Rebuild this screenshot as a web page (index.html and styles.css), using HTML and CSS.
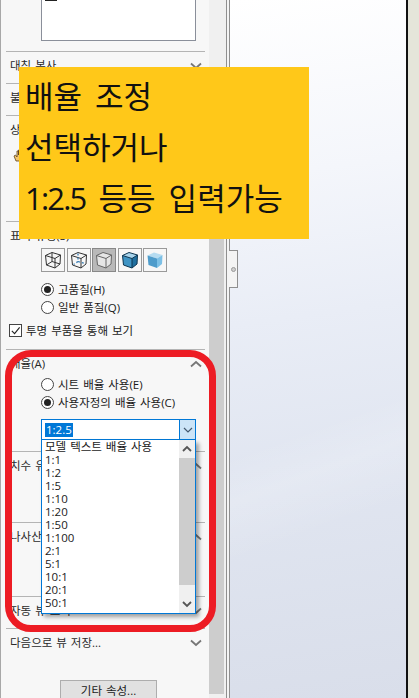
FILE: index.html
```html
<!DOCTYPE html>
<html lang="ko">
<head>
  <meta charset="UTF-8">
  <meta name="viewport" content="width=device-width, initial-scale=1.0">
  <title>배율 조정</title>
  <link rel="stylesheet" href="styles.css">
</head>
<body>
  <div class="app">
    <div class="panel">
      <div class="preview-wrap">
        <div class="preview"><span class="preview-dash"></span></div>
      </div>

      <div class="section section-short">
        <div class="section-head"><span>대칭 복사</span><svg class="chevron" viewBox="0 0 12 8"><path d="M1 1.500 6 6l5-4.500"/></svg></div>
      </div>
      <div class="section section-short">
        <div class="section-head"><span>불러올 모델</span><svg class="chevron" viewBox="0 0 12 8"><path d="M1 1.500 6 6l5-4.500"/></svg></div>
      </div>
      <div class="section section-state">
        <div class="section-head"><span>상태</span></div>
        <svg class="hand" viewBox="0 0 12 14"><path d="M3 13 1 8l1.500-1L4 9V3h1.500v4V2H7v5V3h1.500v4.500V5H10v6l-1 2z"/></svg>
      </div>
      <div class="section section-display">
        <div class="section-head"><span>표시 유형(S)</span></div>
        <div class="view-buttons">
          <button class="view-button">
            <svg viewBox="0 0 20 20"><path class="wire" d="M2.500 5.500 9 2.500 17.500 5 17 14l-5 4-8.500-3zM2.500 5.500 12 8.500 17.500 5M12 8.500V18M9 2.500v9l-5.500 3.500M9 11.500l8 2.500"/></svg>
          </button>
          <button class="view-button">
            <svg viewBox="0 0 20 20"><path class="wire" d="M2.500 5.500 9 2.500 17.500 5 17 14l-5 4-8.500-3zM2.500 5.500 12 8.500 17.500 5M12 8.500V18"/><path class="hidden-line" d="M9 3.500v8L4.500 14.500M9 11.500l7 2"/></svg>
          </button>
          <button class="view-button is-active">
            <svg viewBox="0 0 20 20"><path class="solid-grey" d="M2.500 5.500 9 2.500 17.500 5 17 14l-5 4-8.500-3z"/><path class="wire-grey" d="M2.500 5.500 12 8.500 17.500 5M12 8.500V18"/></svg>
          </button>
          <button class="view-button">
            <svg viewBox="0 0 20 20"><path class="face-top" d="M2.500 5.500 9 2.500 17.500 5 12 8.500z"/><path class="face-front" d="M2.500 5.500 12 8.500V18l-8.500-3z"/><path class="face-side" d="M12 8.500 17.500 5 17 14l-5 4z"/><path class="wire-dark" d="M2.500 5.500 9 2.500 17.500 5 17 14l-5 4-8.500-3zM2.500 5.500 12 8.500 17.500 5M12 8.500V18"/></svg>
          </button>
          <button class="view-button">
            <svg viewBox="0 0 20 20"><path class="face-top-soft" d="M2.500 5.500 9 2.500 17.500 5 12 8.500z"/><path class="face-front-soft" d="M2.500 5.500 12 8.500V18l-8.500-3z"/><path class="face-side-soft" d="M12 8.500 17.500 5 17 14l-5 4z"/></svg>
          </button>
        </div>
        <label class="radio-row"><span class="radio is-on"></span>고품질(H)</label>
        <label class="radio-row"><span class="radio"></span>일반 품질(Q)</label>
        <label class="check-row"><span class="check"><svg viewBox="0 0 12 12"><path d="M2 6.500 5 9.500 10.500 2.500"/></svg></span>투명 부품을 통해 보기</label>
      </div>
      <div class="section section-scale">
        <div class="section-head"><span>배율(A)</span><svg class="chevron" viewBox="0 0 12 8"><path d="M1 6.500 6 2l5 4.500"/></svg></div>
        <label class="radio-row radio-first"><span class="radio"></span>시트 배율 사용(E)</label>
        <label class="radio-row"><span class="radio is-on"></span>사용자정의 배율 사용(C)</label>
      </div>
      <div class="section section-dim">
        <div class="section-head"><span>치수 유형</span><svg class="chevron" viewBox="0 0 12 8"><path d="M1 6.500 6 2l5 4.500"/></svg></div>
      </div>
      <div class="section section-thread">
        <div class="section-head"><span>나사산 표시</span><svg class="chevron" viewBox="0 0 12 8"><path d="M1 6.500 6 2l5 4.500"/></svg></div>
      </div>
      <div class="section section-short">
        <div class="section-head"><span>자동 뷰 표시</span><svg class="chevron" viewBox="0 0 12 8"><path d="M1 1.500 6 6l5-4.500"/></svg></div>
      </div>
      <div class="section section-save">
        <div class="section-head"><span>다음으로 뷰 저장...</span><svg class="chevron" viewBox="0 0 12 8"><path d="M1 1.500 6 6l5-4.500"/></svg></div>
      </div>
      <div class="more-row"><button class="more-button">기타 속성...</button></div>
    </div>

    <div class="panel-scroll"><div class="panel-thumb"></div></div>

    <div class="sash"></div>
    <div class="viewport"></div>
    <div class="frame-edge"></div>
  </div>

  <div class="sash-handle"><span></span></div>

  <div class="ring"></div>

  <div class="combo">
    <div class="combo-field">
      <div class="combo-value"><span>1:2.5</span></div>
      <div class="combo-arrow"><svg class="chevron chevron-blue" viewBox="0 0 12 8"><path d="M2 2l4 4 4-4"/></svg></div>
    </div>
    <div class="combo-list">
      <ul class="combo-items">
        <li>모델 텍스트 배율 사용</li>
        <li>1:1</li>
        <li>1:2</li>
        <li>1:5</li>
        <li>1:10</li>
        <li>1:20</li>
        <li>1:50</li>
        <li>1:100</li>
        <li>2:1</li>
        <li>5:1</li>
        <li>10:1</li>
        <li>20:1</li>
        <li>50:1</li>
      </ul>
      <div class="list-scroll">
        <svg class="list-arrow" viewBox="0 0 12 8"><path d="M2 6l4-4 4 4"/></svg>
        <div class="list-thumb"></div>
        <svg class="list-arrow list-arrow-down" viewBox="0 0 12 8"><path d="M2 2l4 4 4-4"/></svg>
      </div>
    </div>
  </div>

  <div class="callout">
    <p>배율 조정</p>
    <p>선택하거나</p>
    <p><span class="callout-ratio">1:2.5</span> 등등 입력가능</p>
  </div>
</body>
</html>
```

FILE: styles.css
```css
* {
  box-sizing: border-box;
}

html,
body {
  height: 100%;
}

body {
  margin: 0;
  overflow: hidden;
  position: relative;
  font-family: "Open Sans", "Noto Sans CJK KR", sans-serif;
  font-size: 11.5px;
  word-spacing: 1px;
  color: #1a1a1a;
  background-color: #f7f7f7;
}

.app {
  display: flex;
  height: 698px;
}

.panel {
  width: 209px;
  flex: none;
  padding-left: 5px;
  padding-right: 4px;
  background-color: #f7f7f7;
  border-left: 1px solid #a8a8a8;
  overflow: hidden;
}

.preview-wrap {
  height: 51px;
  padding-left: 35px;
  padding-right: 9px;
}

.preview {
  height: 41px;
  background-color: white;
  border: 1px solid #8a8f9a;
  border-top: none;
}

.preview-dash {
  display: block;
  width: 12px;
  height: 1px;
  margin-left: 3px;
  background-color: #222;
}

.section {
  border-top: 1px solid #b4b4b4;
  padding-top: 4px;
}

.section-short {
  height: 32px;
}

.section-state {
  height: 106px;
}

.section-display {
  height: 128px;
}

.section-scale {
  height: 102px;
}

.section-dim {
  height: 71px;
}

.section-thread {
  height: 74px;
}

.section-save {
  height: 52px;
}

.section-head {
  display: flex;
  align-items: center;
  justify-content: space-between;
  height: 20px;
  padding-left: 4px;
  padding-right: 3px;
  line-height: 20px;
  color: #2a2a2a;
}

.chevron {
  width: 12px;
  height: 8px;
  flex: none;
  fill: none;
  stroke: #777;
  stroke-width: 1.8;
}

.chevron-blue {
  stroke: #44596e;
  stroke-width: 1.2;
}

.hand {
  display: block;
  width: 12px;
  height: 14px;
  margin: 8px 0 0 7px;
  fill: #f2c56b;
  stroke: #5a4020;
  stroke-width: 0.8;
}

.view-buttons {
  display: flex;
  gap: 1.5px;
  margin: 2px 0 8px 35px;
}

.view-button {
  width: 24px;
  height: 24px;
  padding: 1px;
  background-color: #f7f7f7;
  border: 1px solid #9a9a9a;
}

.view-button svg {
  display: block;
  width: 20px;
  height: 20px;
}

.view-button.is-active {
  background-color: #b9b9b9;
  border-color: #888;
}

.wire {
  fill: none;
  stroke: #333;
  stroke-width: 1;
}

.hidden-line {
  fill: none;
  stroke: #3b7fb5;
  stroke-width: 1.3;
  stroke-dasharray: 2 2;
}

.solid-grey {
  fill: #e6e6e6;
  stroke: #666;
  stroke-width: 1;
}

.wire-grey {
  fill: none;
  stroke: #666;
  stroke-width: 1;
}

.face-top {
  fill: #a8d4ec;
}

.face-front {
  fill: #3f94c4;
}

.face-side {
  fill: #1f6f9f;
}

.wire-dark {
  fill: none;
  stroke: #0d3550;
  stroke-width: 1;
}

.face-top-soft {
  fill: #b6dcf1;
}

.face-front-soft {
  fill: #4e9ccb;
}

.face-side-soft {
  fill: #7cc0e6;
}

.radio-row {
  display: flex;
  align-items: center;
  gap: 4px;
  height: 18px;
  padding-left: 35px;
}

.radio-first {
  margin-top: 1px;
}

.radio {
  width: 13px;
  height: 13px;
  flex: none;
  position: relative;
  background-color: white;
  border: 1px solid #444;
  border-radius: 50%;
}

.radio.is-on::after {
  content: "";
  position: absolute;
  left: 2px;
  top: 2px;
  width: 7px;
  height: 7px;
  border-radius: 50%;
  background-color: #222;
}

.check-row {
  display: flex;
  align-items: center;
  gap: 4px;
  height: 18px;
  margin-top: 5px;
  padding-left: 3px;
}

.check {
  width: 13px;
  height: 13px;
  flex: none;
  background-color: white;
  border: 1px solid #444;
}

.check svg {
  display: block;
  width: 11px;
  height: 11px;
  fill: none;
  stroke: #222;
  stroke-width: 1.2;
}

.more-row {
  display: flex;
  padding-left: 54px;
}

.more-button {
  width: 97px;
  height: 24px;
  padding: 0 0 5px;
  font: inherit;
  word-spacing: 1px;
  color: #1a1a1a;
  background-color: #e1e1e1;
  border: 1px solid #adadad;
}

.panel-scroll {
  width: 17px;
  flex: none;
  padding: 100px 2px 4px 0;
  background-color: #f0f0f0;
}

.panel-thumb {
  height: 100%;
  background-color: #cdcdcd;
}

.sash {
  width: 4px;
  flex: none;
  background-color: #f4f4f4;
  border-left: 1px solid #8f8f8f;
  border-right: 1px solid #8f8f8f;
}

.viewport {
  flex: 1;
  background:
    linear-gradient(160deg, transparent 60%, rgba(255, 255, 255, 0.16) 66%, transparent 74%),
    linear-gradient(172deg, #ffffff 0%, #f4f6fb 25%, #e9edf6 45%, #e1e6f1 65%, #d9deea 100%);
}

.frame-edge {
  width: 13px;
  flex: none;
  background-color: #e5e5da;
  border-left: 2px solid #111;
}

.sash-handle {
  position: absolute;
  left: 229px;
  top: 250px;
  width: 9px;
  height: 38px;
  display: flex;
  align-items: center;
  justify-content: center;
  background-color: #f4f4f4;
  border: 1px solid #8f8f8f;
  border-left: none;
}

.sash-handle span {
  width: 5px;
  height: 5px;
  border: 1px solid #999;
  border-radius: 50%;
  background-color: #cfcfcf;
}

.ring {
  position: absolute;
  left: 5px;
  top: 350px;
  width: 211px;
  height: 282px;
  border: 7px solid #ed1c24;
  border-radius: 26px;
}

.combo {
  position: absolute;
  left: 41px;
  top: 419px;
  width: 155px;
}

.combo-field {
  display: flex;
  height: 21px;
  background-color: white;
  border: 1px solid #0078d7;
}

.combo-value {
  flex: 1;
  padding: 3px;
  line-height: 14px;
}

.combo-value span {
  display: inline-block;
  padding: 0 1px;
  color: white;
  background-color: #0078d7;
}

.combo-arrow {
  width: 16px;
  display: flex;
  align-items: center;
  justify-content: center;
  background-color: #cce4f7;
  border-left: 1px solid #0078d7;
}

.combo-list {
  display: flex;
  height: 174px;
  background-color: white;
  border: 1px solid #0078d7;
  border-top: none;
  box-shadow: 3px 3px 4px rgba(0, 0, 0, 0.35);
}

.combo-items {
  flex: 1;
  margin: 0;
  padding: 0 0 0 3px;
  list-style: none;
}

.combo-items li {
  height: 13px;
  line-height: 13px;
  white-space: nowrap;
}

.list-scroll {
  width: 16px;
  display: flex;
  flex-direction: column;
  background-color: #f0f0f0;
}

.list-arrow {
  width: 12px;
  height: 8px;
  flex: none;
  margin: 5px 2px;
  fill: none;
  stroke: #555;
  stroke-width: 1.8;
}

.list-thumb {
  flex: 1;
  margin-bottom: 15px;
  background-color: #cdcdcd;
}

.list-arrow-down {
  margin: 0 2px 5px;
}

.callout {
  position: absolute;
  left: 19px;
  top: 67px;
  width: 290px;
  height: 172px;
  padding: 4px 0 0 6px;
  background-color: #ffc819;
  color: #111;
  font-size: 31px;
  word-spacing: 5px;
}

.callout p {
  margin: 0;
  height: 51px;
  line-height: 51px;
  white-space: nowrap;
}

.callout-ratio {
  letter-spacing: -1.8px;
}
```
